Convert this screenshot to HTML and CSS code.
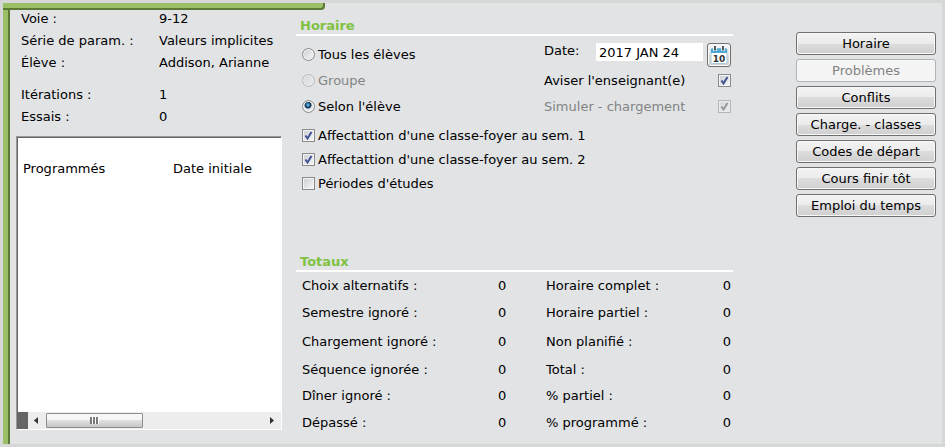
FILE: index.html
```
<!DOCTYPE html>
<html lang="fr">
<head>
<meta charset="UTF-8">
<meta name="viewport" content="width=device-width, initial-scale=1.0">
<title>Horaire</title>
<link rel="stylesheet" href="styles.css">
</head>
<body>

<div class="window">
  <div class="top-bar"></div>

  <!-- Élève -->
  <aside class="sidebar">
    <dl class="info">
      <dt>Voie :</dt><dd>9-12</dd>
      <dt>Série de param. :</dt><dd>Valeurs implicites</dd>
      <dt>Élève :</dt><dd>Addison, Arianne</dd>
    </dl>
    <dl class="info">
      <dt>Itérations :</dt><dd>1</dd>
      <dt>Essais :</dt><dd>0</dd>
    </dl>
    <div class="list-box">
      <div class="list-header">
        <span>Programmés</span>
        <span>Date initiale</span>
      </div>
      <div class="scrollbar">
        <div class="scroll-corner"></div>
        <svg class="arrow" width="16" height="17" viewBox="0 0 16 17"><path d="M10 5v7L6 8.500z" fill="#333"/></svg>
        <div class="scroll-track">
          <div class="scroll-thumb">
            <svg width="9" height="7" viewBox="0 0 9 7"><path d="M1 0v7M4 0v7M7 0v7" stroke="#555" stroke-width="1.500"/><path d="M2.500 0v7M5.500 0v7M8.500 0v7" stroke="#fff"/></svg>
          </div>
        </div>
        <svg class="arrow" width="16" height="17" viewBox="0 0 16 17"><path d="M5 5v7l4-3.500z" fill="#333"/></svg>
      </div>
    </div>
  </aside>

  <main class="content">
    <section>
      <h2>Horaire</h2>
      <div class="options">
        <div class="choices">
          <label class="option"><input type="radio" name="portee">Tous les élèves</label>
          <label class="option disabled"><input type="radio" name="portee" disabled>Groupe</label>
          <label class="option"><input type="radio" name="portee" checked>Selon l'élève</label>
        </div>
        <div class="settings">
          <div class="date-row">
            <label for="date">Date:</label>
            <input type="text" id="date" class="date-input" value="2017 JAN 24">
            <button type="button" class="calendar-button" aria-label="Calendrier">
              <svg width="18" height="18" viewBox="0 0 18 18">
                <rect x="1" y="2.500" width="16" height="15" rx="1.500" fill="#fff" stroke="#a9c9d8"/>
                <path d="M1 3.500q0-1 1-1h14q1 0 1 1V7H1z" fill="#4fa9d3"/>
                <path d="M5 1v4M13 1v4" stroke="#fff" stroke-width="3.500"/>
                <path d="M5 0v4.500M13 0v4.500" stroke="#4a5a63" stroke-width="2"/>
                <text x="9" y="16" text-anchor="middle" class="calendar-day">10</text>
              </svg>
            </button>
          </div>
          <label class="option end">Aviser l'enseignant(e)<input type="checkbox" checked></label>
          <label class="option end disabled">Simuler - chargement<input type="checkbox" checked disabled></label>
        </div>
      </div>
      <div class="checks">
        <label class="option"><input type="checkbox" checked>Affectattion d'une classe-foyer au sem. 1</label>
        <label class="option"><input type="checkbox" checked>Affectattion d'une classe-foyer au sem. 2</label>
        <label class="option"><input type="checkbox">Périodes d'études</label>
      </div>
    </section>

    <section class="totals">
      <h2>Totaux</h2>
      <table>
        <tr><th>Choix alternatifs :</th><td>0</td><th>Horaire complet :</th><td>0</td></tr>
        <tr class="medium"><th>Semestre ignoré :</th><td>0</td><th>Horaire partiel :</th><td>0</td></tr>
        <tr class="tall"><th>Chargement ignoré :</th><td>0</td><th>Non planifié :</th><td>0</td></tr>
        <tr><th>Séquence ignorée :</th><td>0</td><th>Total :</th><td>0</td></tr>
        <tr><th>Dîner ignoré :</th><td>0</td><th>% partiel :</th><td>0</td></tr>
        <tr class="medium"><th>Dépassé :</th><td>0</td><th>% programmé :</th><td>0</td></tr>
      </table>
    </section>
  </main>

  <nav class="actions">
    <button type="button">Horaire</button>
    <button type="button" disabled>Problèmes</button>
    <button type="button">Conflits</button>
    <button type="button">Charge. - classes</button>
    <button type="button">Codes de départ</button>
    <button type="button">Cours finir tôt</button>
    <button type="button">Emploi du temps</button>
  </nav>
</div>

</body>
</html>
```
FILE: styles.css
```
* {
  box-sizing: border-box;
}
body {
  margin: 0;
  font-family: Verdana, 'DejaVu Sans', sans-serif;
  font-size: 13px;
  color: #000;
  background-color: #e1e3e5;
}
.window {
  position: relative;
  display: flex;
  min-height: 100vh;
  border: 3px solid #d6d7d7;
}
/* green tab edge that lies over the top of the columns */
.top-bar {
  position: absolute;
  top: 0;
  left: 0;
  width: 322px;
  height: 7px;
  background-color: #9abf66;
  border-bottom: 2px solid #5c7a35;
  border-right: 2px solid #5c7a35;
  border-bottom-right-radius: 4px;
}

/* left column */
.sidebar {
  display: flex;
  flex-direction: column;
  width: 279px;
  padding: 5px 0 14px 6px;
  border-left: 5px solid #9abf66;
  box-shadow: inset 2px 0 #5c7a35;
}
.info {
  display: grid;
  grid-template-columns: 138px 1fr;
  margin: 0 0 10px;
  padding-left: 7px;
  line-height: 22px;
  white-space: nowrap;
}
.info dd {
  margin: 0;
}
.list-box {
  flex: 1;
  display: flex;
  flex-direction: column;
  justify-content: space-between;
  margin: -2px 0 0 2px;
  background-color: #fff;
  border: 1px solid #fff;
  border-top-color: #999;
  border-left-color: #999;
  box-shadow: inset 1px 1px #666;
}
.list-header {
  display: grid;
  grid-template-columns: 150px 1fr;
  padding: 23px 0 0 6px;
  line-height: 18px;
}
.scrollbar {
  display: flex;
  height: 17px;
  background-color: #ededed;
}
.scroll-corner {
  width: 11px;
  background-color: #666;
}
.scroll-track {
  flex: 1;
  padding: 1px 2px;
}
.scroll-thumb {
  display: flex;
  align-items: center;
  justify-content: center;
  width: 97px;
  height: 15px;
  border: 1px solid #8e8e8e;
  border-radius: 1px;
  background: linear-gradient(#f6f6f6 45%, #e0e0e0 50%, #c6c6c6);
}

/* middle column */
.content {
  flex: 1;
  margin: 0 63px 0 14px;
  padding-top: 15px;
}
h2 {
  margin: 0;
  padding-left: 4px;
  border-bottom: 2px solid #fff;
  font-size: 13px;
  line-height: 16px;
  color: #7fc241;
}
.options {
  display: flex;
  justify-content: space-between;
  padding: 5px 2px 4px 6px;
}
.option {
  display: flex;
  align-items: center;
  gap: 3px;
  height: 26px;
}
.option.end {
  justify-content: space-between;
}
.option.disabled {
  color: #838383;
}
.settings {
  width: 187px;
}
.date-row {
  display: flex;
  align-items: flex-start;
  gap: 4px;
  padding-top: 2px;
}
.date-row label {
  flex: 1;
  line-height: 16px;
}
.date-input {
  width: 107px;
  height: 18px;
  padding: 0 3px;
  border: 0;
  background-color: #fff;
  font: inherit;
}
.checks {
  padding-left: 6px;
}
.checks .option {
  height: 24px;
}
input[type="checkbox"],
input[type="radio"] {
  appearance: none;
  width: 13px;
  height: 13px;
  margin: 0;
  border: 1px solid #8a8b8c;
  background: linear-gradient(135deg, #c9ccd1, #f8f8f8);
  box-shadow: inset 0 0 0 1px #f4f4f4;
}
input[type="radio"] {
  border-radius: 50%;
}
input[type="radio"]:checked {
  background: radial-gradient(circle at 5px 4px, #7fd0ee 0, #1c5f8c 2px, #0e2c48 3px, #e4e8ec 4px);
}
input[type="checkbox"]:checked {
  background: url("data:image/svg+xml,%3Csvg xmlns='http://www.w3.org/2000/svg' viewBox='0 0 11 11'%3E%3Cpath d='M2.500 5.500l2 3L8.500 2' fill='none' stroke='%23405090' stroke-width='2'/%3E%3C/svg%3E"), linear-gradient(135deg, #c9ccd1, #f8f8f8);
}
input:disabled {
  opacity: 0.5;
}
input[type="checkbox"]:disabled {
  filter: grayscale(1);
}
.calendar-button {
  display: flex;
  align-items: center;
  justify-content: center;
  width: 24px;
  height: 24px;
  padding: 0;
}
.calendar-day {
  font-size: 9px;
  font-weight: bold;
  fill: #333;
}

/* totals */
.totals {
  margin-top: 59px;
}
table {
  width: 100%;
  border-collapse: collapse;
  table-layout: fixed;
}
tr {
  height: 26px;
}
tr.medium {
  height: 28px;
}
tr.tall {
  height: 30px;
}
th,
td {
  padding: 0;
  font-weight: normal;
  text-align: left;
}
th:first-child {
  width: 202px;
  padding-left: 6px;
}
td:nth-child(2) {
  width: 48px;
}
td:last-child {
  width: 30px;
  padding-right: 2px;
  text-align: right;
}

/* right column */
.actions {
  display: flex;
  flex-direction: column;
  gap: 4px;
  width: 146px;
  padding: 29px 6px 0 0;
}
button {
  border: 1px solid #707070;
  border-radius: 3px;
  background: linear-gradient(#f3f3f3, #ebebeb 50%, #dddddd 50%, #cfcfcf);
  box-shadow: inset 0 0 0 1px #f8f8f8;
  font-family: inherit;
  font-size: 13px;
  color: #000;
}
.actions button {
  height: 23px;
  padding: 0;
}
button:disabled {
  border-color: #adb2b5;
  background: #f4f4f4;
  color: #838383;
}
```
